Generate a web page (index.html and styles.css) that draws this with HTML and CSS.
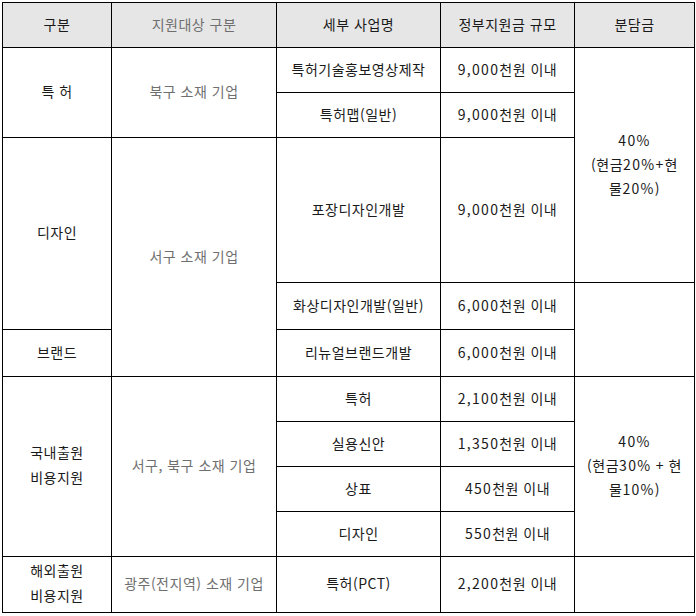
FILE: index.html
```html
<!DOCTYPE html>
<html lang="ko">
<head>
<meta charset="utf-8">
<link rel="stylesheet" href="styles.css">
</head>
<body>
<table class="grid">
  <colgroup>
    <col class="c1"><col class="c2"><col class="c3"><col class="c4"><col class="c5">
  </colgroup>
  <thead>
    <tr class="h45">
      <th>구분</th>
      <th class="muted">지원대상 구분</th>
      <th>세부 사업명</th>
      <th>정부지원금 규모</th>
      <th>분담금</th>
    </tr>
  </thead>
  <tbody>
    <tr class="h45">
      <td rowspan="2">특 허</td>
      <td rowspan="2" class="muted">북구 소재 기업</td>
      <td>특허기술홍보영상제작</td>
      <td><span class="num">9,000</span>천원 이내</td>
      <td rowspan="3" class="share"><span class="num">40%</span><br>(현금<span class="num">20%+</span>현<br>물<span class="num">20%</span>)</td>
    </tr>
    <tr class="h45">
      <td>특허맵(일반)</td>
      <td><span class="num">9,000</span>천원 이내</td>
    </tr>
    <tr class="h145">
      <td rowspan="2">디자인</td>
      <td rowspan="3" class="muted">서구 소재 기업</td>
      <td>포장디자인개발</td>
      <td><span class="num">9,000</span>천원 이내</td>
    </tr>
    <tr class="h47">
      <td>화상디자인개발(일반)</td>
      <td><span class="num">6,000</span>천원 이내</td>
      <td rowspan="2"></td>
    </tr>
    <tr class="h47">
      <td>브랜드</td>
      <td>리뉴얼브랜드개발</td>
      <td><span class="num">6,000</span>천원 이내</td>
    </tr>
    <tr class="h45">
      <td rowspan="4" class="two">국내출원<br>비용지원</td>
      <td rowspan="4" class="muted">서구, 북구 소재 기업</td>
      <td>특허</td>
      <td><span class="num">2,100</span>천원 이내</td>
      <td rowspan="4" class="share"><span class="num">40%</span><br>(현금<span class="num">30%</span> + 현<br>물<span class="num">10%</span>)</td>
    </tr>
    <tr class="h45">
      <td>실용신안</td>
      <td><span class="num">1,350</span>천원 이내</td>
    </tr>
    <tr class="h45">
      <td>상표</td>
      <td><span class="num">450</span>천원 이내</td>
    </tr>
    <tr class="h45">
      <td>디자인</td>
      <td><span class="num">550</span>천원 이내</td>
    </tr>
    <tr class="h56">
      <td class="two">해외출원<br>비용지원</td>
      <td class="muted">광주(전지역) 소재 기업</td>
      <td>특허(PCT)</td>
      <td><span class="num">2,200</span>천원 이내</td>
      <td></td>
    </tr>
  </tbody>
</table>
</body>
</html>
```

FILE: styles.css
```css
html, body {
  margin: 0;
  padding: 0;
  background: #ffffff;
}

.grid {
  margin: 2px 0 0 2px;
  width: 692px;
  table-layout: fixed;
  border-collapse: collapse;
  font-family: "Noto Sans CJK KR", "Noto Sans", sans-serif;
  font-size: 14px;
  letter-spacing: 0.5px;
  color: #1a1a1a;
}

.c1 { width: 109px; }
.c2 { width: 165px; }
.c3 { width: 164px; }
.c4 { width: 134px; }
.c5 { width: 120px; }

.grid th,
.grid td {
  border: 1px solid #000000;
  padding: 0 2px 3px;
  text-align: center;
  vertical-align: middle;
  font-weight: normal;
  line-height: 24px;
}

.grid th {
  background: #e6e6e6;
}

.grid .muted {
  color: #6f6f6f;
}

.grid .two {
  line-height: 25px;
}

.num {
  letter-spacing: 1.3px;
}

.h45 { height: 45px; }
.h47 { height: 47px; }
.h56 { height: 56px; }
.h145 { height: 145px; }
```
